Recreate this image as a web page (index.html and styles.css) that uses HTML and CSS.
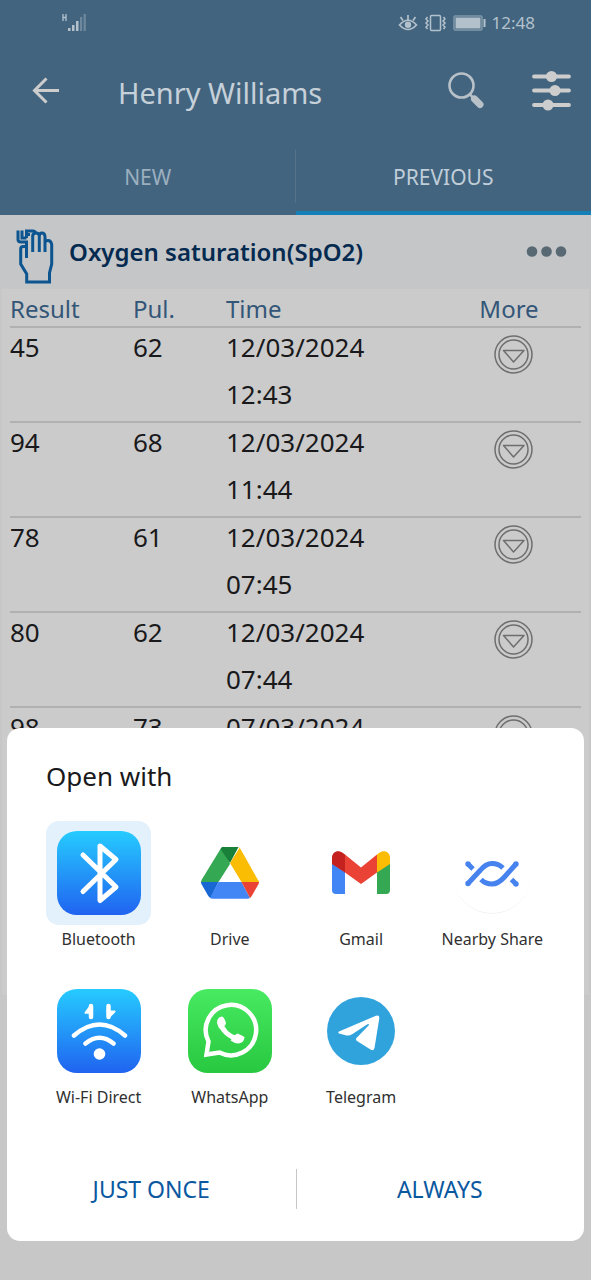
FILE: index.html
```html
<!DOCTYPE html>
<html lang="en">
<head>
<meta charset="utf-8">
<meta name="viewport" content="width=device-width, initial-scale=1">
<title>Henry Williams</title>
<link rel="stylesheet" href="styles.css">
</head>
<body>
<div class="screen">
  <header class="top">
    <div class="status">
      <svg class="signal" width="26" height="20" viewBox="0 0 26 20" aria-label="Mobile signal"><path d="M2 1v7M5 1v7M2 4.500h3" fill="none" stroke="#b3c1cc" stroke-width="1.300"/><g fill="#b3c1cc"><rect x="7" y="15" width="2.500" height="3"/><rect x="11" y="12" width="2.500" height="6"/><rect x="15" y="8" width="2.500" height="10"/></g><g fill="#6f889d"><rect x="19" y="4" width="2.200" height="14"/><rect x="22.600" y="1" width="2.200" height="17"/></g></svg>
      <div class="status-right">
        <svg width="20" height="18" viewBox="0 0 20 18" aria-label="Eye comfort"><g fill="none" stroke="#b3c1cc" stroke-width="1.700"><path d="M1.500 11Q10 1.500 18.500 11Q10 20 1.500 11zM10 5.500V1M5 6.500L2.500 3M15 6.500L17.500 3"/></g><circle cx="10" cy="10.800" r="3.200" fill="#b3c1cc"/></svg>
        <svg width="23" height="18" viewBox="0 0 23 18" aria-label="Vibrate"><g fill="none" stroke="#b3c1cc" stroke-width="1.500"><rect x="6.500" y="1.500" width="10" height="15" rx="1"/><path d="M3.500 3l-1.500 2 2 2-2 2 2 2-2 2 1.500 2M19.500 3l1.500 2-2 2 2 2-2 2 2 2-1.500 2"/></g></svg>
        <svg width="33" height="16" viewBox="0 0 33 16" aria-label="Battery"><rect x="1" y="1" width="28" height="14" rx="1.500" fill="none" stroke="#8299ab" stroke-width="1.500"/><rect x="2.500" y="2.500" width="25" height="11" fill="#b3c1cc"/><rect x="30.500" y="4" width="2" height="8" fill="#b3c1cc"/></svg>
        <span class="clock">12:48</span>
      </div>
    </div>
    <div class="bar">
      <button class="icon-btn" type="button" aria-label="Back"><svg width="28" height="28" viewBox="0 0 28 28"><path d="M27 13.500H3M14.500 1.500L2.500 13.500l12 12" fill="none" stroke="#cdcdcd" stroke-width="3"/></svg></button>
      <h1 class="patient">Henry Williams</h1>
      <button class="icon-btn" type="button" aria-label="Search"><svg width="38" height="38" viewBox="0 0 38 38"><circle cx="14.500" cy="13.500" r="12" fill="none" stroke="#b8c1c8" stroke-width="2.600"/><path d="M22.500 22l4 4" stroke="#b8c1c8" stroke-width="2.500"/><path d="M27.500 27l5.500 5.500" stroke="#b8c1c8" stroke-width="7" stroke-linecap="round"/></svg></button>
      <button class="icon-btn" type="button" aria-label="Filters"><svg width="40" height="40" viewBox="0 0 40 40"><path d="M3 5.500h35M3 19.500h35M3 34h35" stroke="#cdcdcd" stroke-width="3.800" stroke-linecap="round"/><g fill="#cdcdcd"><circle cx="20.500" cy="5.500" r="5.500"/><circle cx="24" cy="19.500" r="5.500"/><circle cx="17" cy="34" r="5.500"/></g></svg></button>
    </div>
    <nav class="tabs">
      <button class="tab" type="button">NEW</button>
      <button class="tab tab-active" type="button">PREVIOUS</button>
    </nav>
  </header>

  <section class="section-head">
    <svg width="38" height="58" viewBox="0 0 38 58" aria-hidden="true"><g fill="none" stroke="#0d5590" stroke-width="3"><path d="M2 3.500v9q0 2.500 3 2.500h5.500v16M6 3.500V11h4.500M10.500 11V4H17q2 0 2.500 2M10.500 7.500H14"/><path d="M16.700 25V9q0-3 3.300-3t3.300 3v16M23.300 9.500q0-3.500 2.700-3.500t3 3.500V25M29 16q0-2.500 3-2.500t3.700 4V37l-2.200 9v9H10.700V47L4.700 37V22q0-2.500 2.500-2.500h3.500"/></g></svg>
    <h2 class="section-title">Oxygen saturation(SpO2)</h2>
    <button class="icon-btn" type="button" aria-label="More options"><svg width="42" height="12" viewBox="0 0 42 12" fill="#596974"><circle cx="7" cy="5.500" r="5.300"/><circle cx="21.500" cy="5.500" r="5.300"/><circle cx="36" cy="5.500" r="5.300"/></svg></button>
  </section>

  <main class="card">
    <table class="results">
      <colgroup><col class="col-result"><col class="col-pulse"><col><col class="col-more"></colgroup>
      <thead><tr><th>Result</th><th>Pul.</th><th>Time</th><th class="more">More</th></tr></thead>
      <tbody>
        <tr><td>45</td><td>62</td><td><span class="line">12/03/2024</span><span class="line">12:43</span></td><td class="more"><button class="icon-btn" type="button" aria-label="Show more"><svg width="40" height="40" viewBox="0 0 40 40"><use href="#expand"/></svg></button></td></tr>
        <tr><td>94</td><td>68</td><td><span class="line">12/03/2024</span><span class="line">11:44</span></td><td class="more"><button class="icon-btn" type="button" aria-label="Show more"><svg width="40" height="40" viewBox="0 0 40 40"><use href="#expand"/></svg></button></td></tr>
        <tr><td>78</td><td>61</td><td><span class="line">12/03/2024</span><span class="line">07:45</span></td><td class="more"><button class="icon-btn" type="button" aria-label="Show more"><svg width="40" height="40" viewBox="0 0 40 40"><use href="#expand"/></svg></button></td></tr>
        <tr><td>80</td><td>62</td><td><span class="line">12/03/2024</span><span class="line">07:44</span></td><td class="more"><button class="icon-btn" type="button" aria-label="Show more"><svg width="40" height="40" viewBox="0 0 40 40"><use href="#expand"/></svg></button></td></tr>
        <tr><td>98</td><td>73</td><td><span class="line">07/03/2024</span></td><td class="more"><button class="icon-btn" type="button" aria-label="Show more"><svg width="40" height="40" viewBox="0 0 40 40"><use href="#expand"/></svg></button></td></tr>
      </tbody>
    </table>
  </main>

  <div class="dialog" role="dialog" aria-labelledby="dialog-title">
    <h2 class="dialog-title" id="dialog-title">Open with</h2>
    <div class="apps">
      <button class="app" type="button">
        <span class="tile tile-selected"><svg width="84" height="84" viewBox="0 0 84 84"><rect width="84" height="84" rx="20" fill="url(#blue)"/><path d="M26 24l33 32-16 13.500V15l16 13.500-33 32" fill="none" stroke="#fff" stroke-width="5" stroke-linecap="round" stroke-linejoin="round"/></svg></span>
        <span class="label">Bluetooth</span>
      </button>
      <button class="app" type="button">
        <span class="tile"><svg width="58" height="52" viewBox="0 0 58 52"><path d="M19.500 2Q21 0 23 0L29 17 17.500 35H0q0-1 .8-2.500z" fill="#34a853"/><path d="M21 0h16.500L29 16 19.500 2z" fill="#188038"/><path d="M37 0q1.500 0 2.500 2L57 33q1 1 1 2H40.500L29 16 38.500 1z" fill="#fbbc04"/><path d="M0 35h17.500L9.500 51Q8 50 7 48.500L.7 37.500Q0 36 0 35z" fill="#1967d2"/><path d="M17.500 35h23L49 51q-1 .800-2.500.800h-35Q10 51.800 9 51z" fill="#4285f4"/><path d="M40.500 35H58q0 1-.7 2.500L51 48.500Q50 50 49 51z" fill="#ea4335"/></svg></span>
        <span class="label">Drive</span>
      </button>
      <button class="app" type="button">
        <span class="tile"><svg width="58" height="44" viewBox="0 0 58 44"><path d="M0 12l13 9v22H4q-4 0-4-4z" fill="#4285f4"/><path d="M58 12l-13 9v22h9q4 0 4-4z" fill="#34a853"/><path d="M0 13V6.500C0 1 6-2 11 2l2 1.500v18z" fill="#c5221f"/><path d="M58 13V6.500C58 1 52-2 47 2l-2 1.500v18z" fill="#fbbc04"/><path d="M13 3.500l16 13 16-13v18L29 33 13 21.500z" fill="#ea4335"/></svg></span>
        <span class="label">Gmail</span>
      </button>
      <button class="app" type="button">
        <span class="tile"><svg width="84" height="84" viewBox="0 0 84 84"><path d="M3 44a39 39 0 0 0 78 0a39 38 0 0 1-78 0z" fill="#f3f3f3"/><g fill="none" stroke="#4683ee" stroke-width="5"><path d="M18 33l5 5M61.500 48.500l4.500 4.500"/><path d="M18 52.500L30.500 39Q36 32.500 42 32.500q6.500 0 11 4.500"/><path d="M66 33L54 46.500Q48 53 42 53q-6.500 0-11-4.500"/></g><g fill="#4683ee"><circle cx="18" cy="33" r="2.700"/><circle cx="18" cy="52.500" r="2.700"/><circle cx="66" cy="33" r="2.700"/><circle cx="66" cy="53" r="2.700"/></g></svg></span>
        <span class="label">Nearby Share</span>
      </button>
      <button class="app" type="button">
        <span class="tile"><svg width="84" height="84" viewBox="0 0 84 84"><rect width="84" height="84" rx="20" fill="url(#blue)"/><g fill="none" stroke="#fff" stroke-width="4.500" stroke-linecap="round" stroke-linejoin="round"><path d="M17 46.500q25.500-22 51 0M28.500 54.500q14-11.500 28 0"/><path d="M34 28V17M51.500 17v11"/></g><path d="M34 14.800l2 10H28q-1-1 0-2zM51.500 30l-2-8.500h8.500q1 1 0 2z" fill="#fff"/><circle cx="42.500" cy="65" r="5.800" fill="#fff"/></svg></span>
        <span class="label">Wi-Fi Direct</span>
      </button>
      <button class="app" type="button">
        <span class="tile"><svg width="84" height="84" viewBox="0 0 84 84"><rect width="84" height="84" rx="20" fill="url(#green)"/><path d="M18.500 65.500L20.500 52.500A25.200 25.200 0 1 1 31.500 63.500z" fill="none" stroke="#fff" stroke-width="4.500"/><path d="M32 33q3 12 17 17" fill="none" stroke="#fff" stroke-width="5"/><path d="M29 34q0-6 5-6.500 2 0 4 6.500 0 2.500-3 4.500l-4 1zM47 46l2.500-1.500q1 0 7 3.500 0 5.500-6 6.500-4 0-8-3z" fill="#fff"/></svg></span>
        <span class="label">WhatsApp</span>
      </button>
      <button class="app" type="button">
        <span class="tile"><svg width="68" height="68" viewBox="0 0 68 68"><circle cx="34" cy="34" r="34" fill="#31a3dc"/><path d="M12 34.500L49 18.700q3.500-1 3.300 2.500L47.500 51q-1 3.500-4 1.500L30 44q-2-2 0-3.500L42 28q0-1.500-2-.5L25.500 37q-3 2-6 1.500L12 36.500q-1.500-1 0-2z" fill="#fff"/></svg></span>
        <span class="label">Telegram</span>
      </button>
    </div>
    <div class="actions">
      <button class="action" type="button">JUST ONCE</button>
      <button class="action" type="button">ALWAYS</button>
    </div>
  </div>
</div>
<svg class="defs" width="0" height="0" aria-hidden="true">
  <defs>
    <linearGradient id="blue" x1="0" y1="0" x2="0" y2="1"><stop offset="0" stop-color="#26cbff"/><stop offset="1" stop-color="#2063f0"/></linearGradient>
    <linearGradient id="green" x1="0" y1="0" x2="0" y2="1"><stop offset="0" stop-color="#47ea60"/><stop offset="1" stop-color="#28c840"/></linearGradient>
    <g id="expand" fill="none" stroke="#6e6e6e" stroke-width="1.500" stroke-linejoin="round"><circle cx="19.500" cy="19.500" r="18.500"/><circle cx="19.500" cy="19.500" r="14.500"/><path d="M9.500 15.500H30L19.500 27z"/></g>
  </defs>
</svg>
</body>
</html>
```

FILE: styles.css
```css
* {
  box-sizing: border-box;
}

body {
  margin: 0;
  background: #c7c7c7;
  color: #19191b;
  font-family: "Noto Sans", sans-serif;
}

button {
  margin: 0;
  padding: 0;
  border: 0;
  background: none;
  color: inherit;
  font: inherit;
}

h1,
h2 {
  margin: 0;
  font-weight: 400;
}

svg {
  display: block;
}

.defs {
  position: absolute;
}

.screen {
  position: relative;
  height: 100vh;
  overflow: hidden;
}

.top {
  background: #42647f;
  color: #c6d0d9;
}

.status {
  display: flex;
  align-items: center;
  justify-content: space-between;
  height: 46px;
  padding: 0 56px 0 61px;
}

.status-right {
  display: flex;
  align-items: center;
  gap: 6px;
}

.clock {
  color: #b3c1cc;
  font-size: 17px;
  line-height: 24px;
}

.bar {
  display: flex;
  align-items: center;
  height: 90px;
  padding: 0 20px 0 32px;
}

.patient {
  flex: 1;
  padding: 4px 0 0 58px;
  font-size: 29px;
  line-height: 40px;
}

.bar .icon-btn + .icon-btn {
  margin-left: 46px;
}

.tabs {
  display: flex;
  height: 79px;
}

.tab {
  flex: 1;
  padding-top: 7px;
  border-bottom: 4px solid transparent;
  color: #9bafbf;
  font-size: 21px;
  background: linear-gradient(#567288, #567288) right 14px / 1px 53px no-repeat;
}

.tab-active {
  border-bottom-color: #1580b8;
  color: #c0ced9;
  background: none;
}

.section-head {
  display: flex;
  align-items: center;
  height: 74px;
  padding: 0 24px 0 16px;
  background: #c4c6c8;
}

.section-head > svg {
  align-self: flex-end;
  margin-bottom: 4px;
}

.section-title {
  flex: 1;
  padding-left: 15px;
  color: #052a50;
  font-size: 24px;
  font-weight: 600;
  line-height: 36px;
}

.card {
  min-height: 706px;
  margin: 0 2px;
  padding: 0 8px;
  background: #cbcbcb;
}

.results {
  width: 100%;
  border-collapse: collapse;
  table-layout: fixed;
  font-size: 26px;
}

.col-result {
  width: 123px;
}

.col-pulse {
  width: 93px;
}

.col-more {
  width: 134px;
}

.results th,
.results td {
  padding: 0;
  border-bottom: 2px solid #b1b1b1;
  line-height: 39px;
  text-align: left;
  vertical-align: top;
}

.results th {
  padding-top: 3px;
  color: #335678;
  font-size: 24px;
  font-weight: 400;
  line-height: 34px;
}

.results td {
  height: 95px;
}

.results .more {
  text-align: center;
}

.results th.more {
  padding-right: 10px;
}

.results td.more {
  padding-top: 7px;
}

.more .icon-btn {
  display: block;
  margin: 0 auto;
}

.line {
  display: block;
}

.line + .line {
  margin-top: 8px;
}

.dialog {
  position: absolute;
  right: 7px;
  bottom: 39px;
  left: 7px;
  padding: 28px 26px 28px;
  border-radius: 13px;
  background: #fff;
}

.dialog-title {
  padding-left: 13px;
  font-size: 26px;
  line-height: 40px;
}

.apps {
  display: grid;
  grid-template-columns: repeat(4, 1fr);
  row-gap: 26px;
  margin-top: 25px;
}

.app {
  display: flex;
  flex-direction: column;
  align-items: center;
}

.tile {
  display: flex;
  align-items: center;
  justify-content: center;
  width: 105px;
  height: 104px;
  border-radius: 13px;
}

.tile-selected {
  background: #e3f1fd;
}

.label {
  color: #303030;
  font-size: 16px;
  line-height: 28px;
  white-space: nowrap;
}

.actions {
  display: flex;
  margin: 54px -26px 0;
}

.action {
  flex: 1;
  height: 48px;
  color: #0a589f;
  font-size: 23px;
  line-height: 40px;
}

.action + .action {
  background: linear-gradient(#c6c6c6, #c6c6c6) left center / 1px 40px no-repeat;
}
```
